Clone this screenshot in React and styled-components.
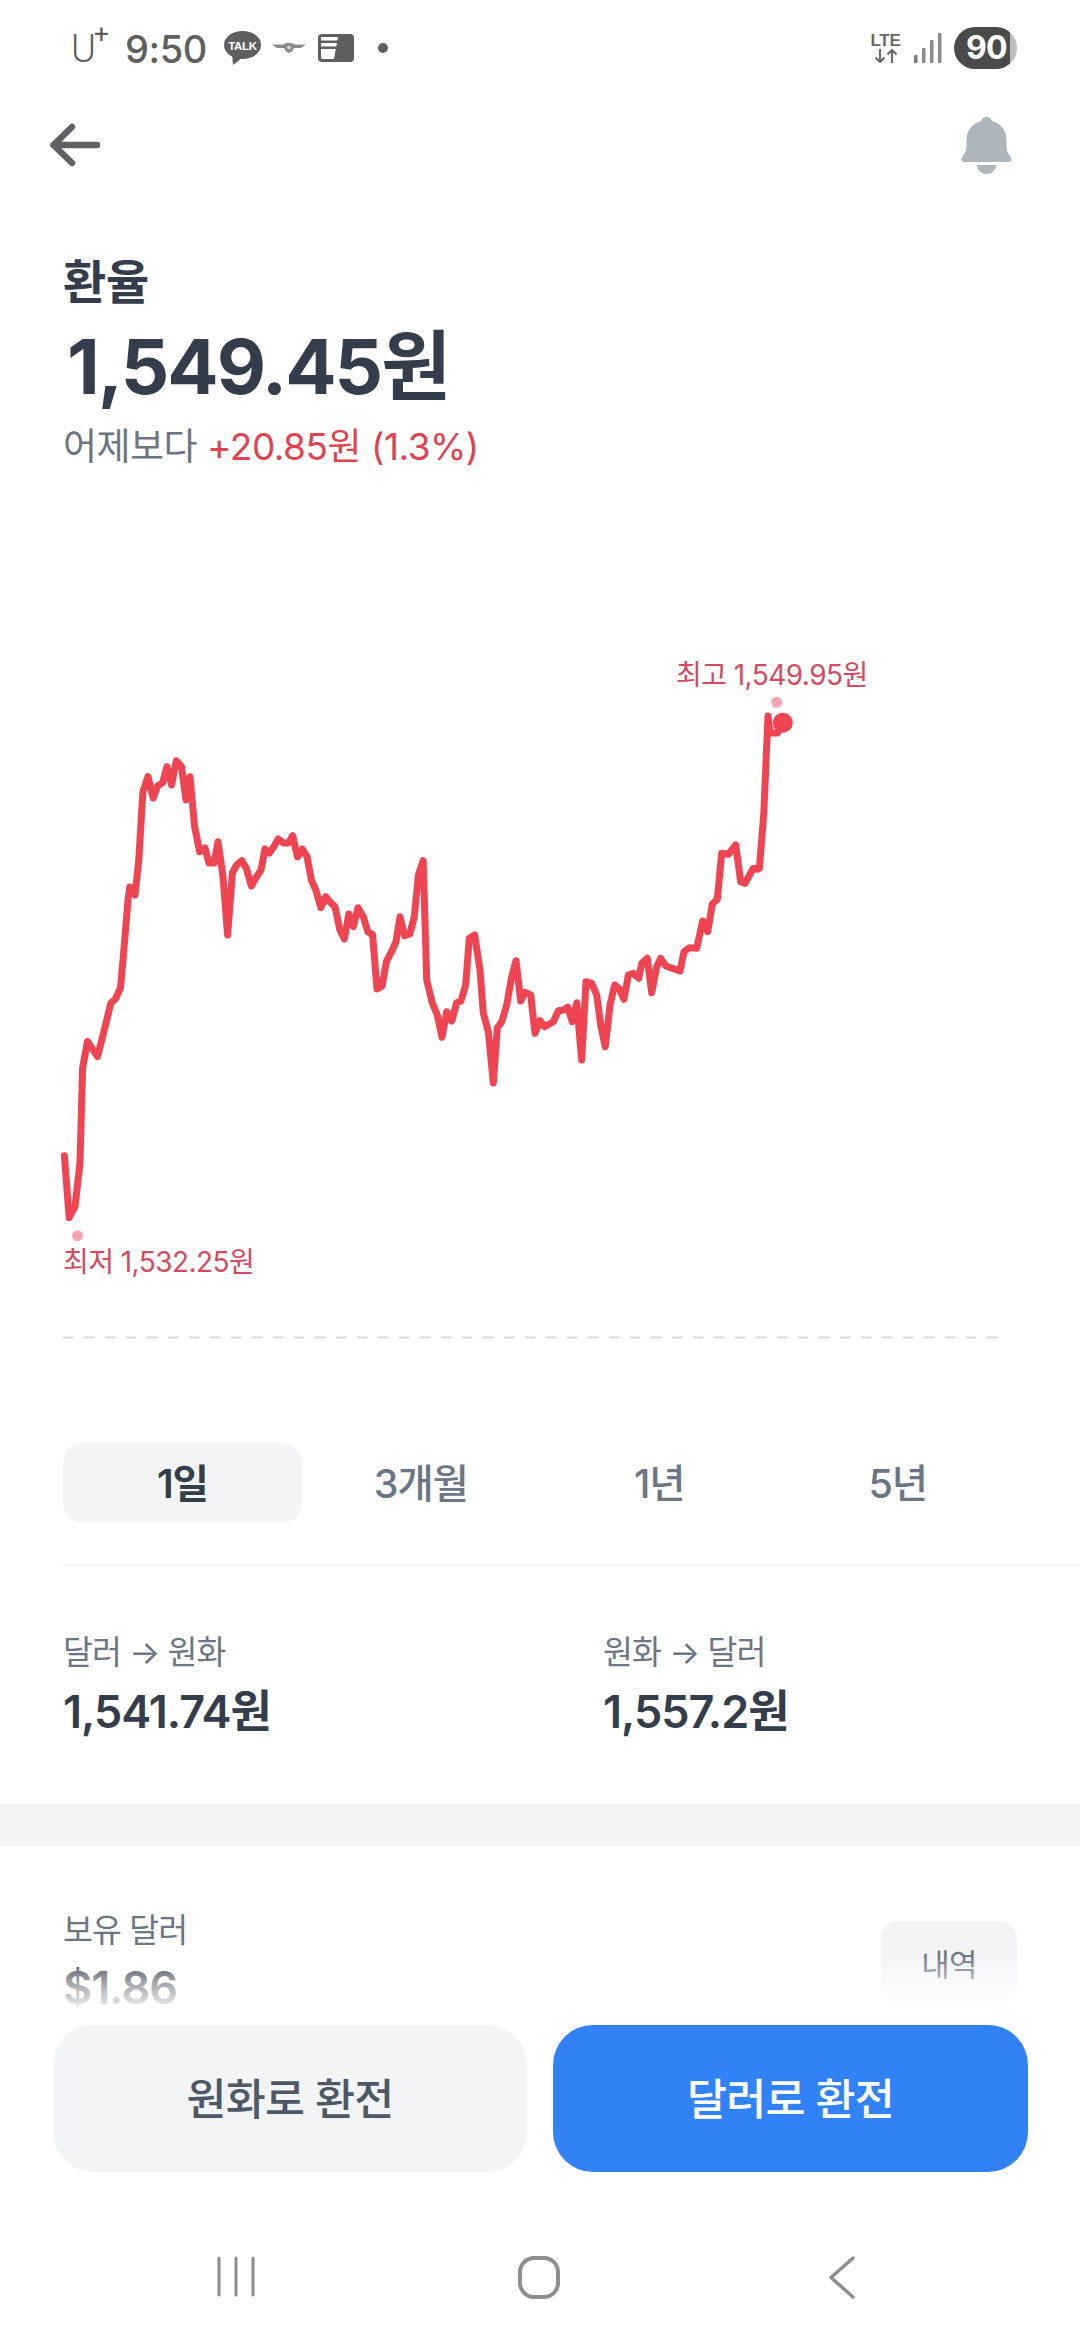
import React from "react";
import styled, { createGlobalStyle } from "styled-components";

const Global = createGlobalStyle`
  html, body { margin: 0; padding: 0; background: #fff; }
  body { font-family: Inter, "Noto Sans CJK KR", sans-serif; }
  * { box-sizing: border-box; }
`;

const Screen = styled.div`
  width: 1080px; height: 2340px; background: #fff; overflow: hidden;
  display: flex; flex-direction: column;
`;
const StatusBar = styled.div`
  height: 96px; flex: none; display: flex; align-items: center; justify-content: space-between;
  padding: 0 63px 0 71px; color: #5f5f5f;
`;
const StatusGroup = styled.div`display: flex; align-items: center; margin-top: -1px;`;
const Carrier = styled.span`
  font: 300 38px/40px Roboto, sans-serif; width: 54px; position: relative; margin-top: 3px;
`;
const CarrierPlus = styled.span`
  position: absolute; left: 23px; top: -10px; font: 400 26px/30px Roboto, sans-serif;
`;
const Clock = styled.span`
  font: 500 38px/40px Inter, sans-serif; width: 99px; letter-spacing: -0.4px; margin-top: 3px;
`;
const NotifyIcon = styled.svg`display: block; flex: none; margin-left: ${p => p.$gap || 0}px;`;
const LteBox = styled.div`
  display: flex; flex-direction: column; align-items: center; width: 31px; margin-right: 13px;
`;
const LteText = styled.span`font: 700 17px/17px "Liberation Sans", sans-serif; letter-spacing: -0.3px; color: #6a6a6a;`;
const Battery = styled.div`
  width: 63px; height: 42px; margin-left: 12px; border-radius: 21px; overflow: hidden;
  background: linear-gradient(90deg, #4a4a4a 0, #4a4a4a 56px, #bdbdbd 56px);
  color: #fff; font: 700 32px/42px Inter, sans-serif; padding-left: 12px; letter-spacing: -0.8px;
`;
const TopNav = styled.div`
  height: 98px; flex: none; display: flex; align-items: center; justify-content: space-between;
  padding: 0 68px 0 47px;
`;
const Scroll = styled.div`flex: 1; min-height: 0; overflow: hidden;`;
const Heading = styled.div`padding: 58px 0 0 63px;`;
const Title = styled.h1`
  margin: 0; font-size: 47px; line-height: 60px; font-weight: 700; color: #333d4b; letter-spacing: -0.2px;
`;
const Price = styled.div`
  margin: 9px 0 0 4px; font-size: 76px; line-height: 90px; font-weight: 700; color: #333d4b; letter-spacing: -2px;
`;
const Delta = styled.div`
  margin-top: 11px; font-size: 37px; line-height: 50px; font-weight: 400; color: #6b7684; letter-spacing: -0.5px;
`;
const DeltaUp = styled.span`color: #e0434f;`;
const Chart = styled.div`position: relative; height: 720px; margin-top: 168px;`;
const ChartSvg = styled.svg`display: block;`;
const ChartLabel = styled.span`
  position: absolute; left: ${p => p.$x}px; top: ${p => p.$y}px;
  font-size: 28px; line-height: 34px; color: #d34a61; letter-spacing: -0.55px; white-space: nowrap;
`;
const Tabs = styled.div`
  margin: 83px 63px 0; display: grid; grid-template-columns: repeat(4, 1fr); height: 80px;
`;
const Tab = styled.div`
  display: flex; align-items: center; justify-content: center; border-radius: 20px;
  padding-bottom: 5px; font-size: 39.500px; letter-spacing: -1.2px;
  font-weight: ${p => (p.$on ? 600 : 500)};
  color: ${p => (p.$on ? "#333d4b" : "#6b7684")};
  background: ${p => (p.$on ? "#f2f4f6" : "transparent")};
`;
const Divider = styled.div`height: 2px; margin: 41px 0 0 63px; background: #f2f4f6;`;
const Rates = styled.div`display: grid; grid-template-columns: 540px 1fr; padding: 65px 0 64px 63px;`;
const SmallLabel = styled.div`font-size: 32.500px; line-height: 44px; color: #6b7684; letter-spacing: -0.9px;`;
const RateValue = styled.div`
  margin-top: 9px; font-size: 45px; line-height: 56px; font-weight: 600; color: #333d4b; letter-spacing: -1px;
`;
const Band = styled.div`height: 42px; background: #f2f4f6;`;
const Holdings = styled.div`
  display: flex; align-items: center; justify-content: space-between; padding: 63px 63px 0;
`;
const Balance = styled.div`
  margin-top: 7px; font-size: 45px; line-height: 56px; font-weight: 600; color: #333d4b; letter-spacing: -1px;
`;
const HistoryButton = styled.div`
  width: 136px; height: 83px; border-radius: 18px; background: #f2f4f6;
  display: flex; align-items: center; justify-content: center;
  font-size: 31px; color: #6b7684; letter-spacing: -0.8px;
`;
const Footer = styled.div`
  flex: none; height: 147px; position: relative; display: grid; grid-template-columns: 474px 475px;
  gap: 26px; padding: 0 52px 0 53px; background: #fff;
  &::before {
    content: ""; position: absolute; left: 0; right: 0; bottom: 100%; height: 70px;
    background: linear-gradient(rgba(255,255,255,0), rgba(255,255,255,0.55) 40%, rgba(255,255,255,0.95) 80%, #fff);
  }
`;
const ActionButton = styled.div`
  border-radius: 40px; display: flex; align-items: center; justify-content: center;
  padding-bottom: 5px; font-size: 43.500px; font-weight: 500; letter-spacing: -0.8px;
  background: ${p => (p.$primary ? "#3182f6" : "#f2f4f6")};
  color: ${p => (p.$primary ? "#fff" : "#4e5968")};
`;
const NavBar = styled.div`
  flex: none; height: 168px; display: grid; grid-template-columns: repeat(3, 303px); justify-content: center;
  padding: 84px 2px 0 0; justify-items: center; align-items: start;
`;

const points = [
  [64.4,1155.7],[69.2,1217.7],[75,1206.7],[80,1163],[82.6,1068],[87.5,1041.5],[97.5,1056.7],[102.3,1038],[110.9,1003],[115.4,999],[120.5,988],[123.3,956.7],[128,900],[129.8,887],[135,895],[138.8,860],[142.9,791.7],[148,776.7],[153.2,798],[157.7,785.7],[162.5,783],[167,766.7],[171.5,785],[176.3,760.7],[181.5,766.7],[186,800],[190,776.7],[194.6,826.7],[199.7,851.7],[204.9,848],[209,863],[214.2,863],[218,841.7],[223,876.7],[227.6,935],[232.4,873],[236.6,865],[241.7,860.7],[246.2,868],[251.4,886],[256.5,876.7],[261,870],[265,849],[269.3,853],[273.8,846.7],[278.2,839],[283.4,843],[288.6,843],[292.7,835.7],[297.5,857],[302.3,849],[307,856.7],[311.6,880.7],[315.8,890],[320.9,907.7],[325.8,896.7],[330.6,902.7],[335,906.7],[339.9,930],[344.4,939],[348.8,914],[353.3,926.7],[358,907.7],[363.3,916.7],[367.8,931.7],[372.6,935],[377,989],[382.2,985.7],[386.4,961.7],[391.5,951.7],[396,941.7],[400,916.7],[404.6,935.7],[409.8,934],[414.3,916.7],[418.4,875],[423.2,860.7],[426.7,980],[432.3,1003],[437.3,1015],[442,1037.3],[446.7,1011.7],[451.7,1021],[456.7,1002.7],[461,1001],[465.7,985],[469.3,938.3],[474.7,935],[480,970],[483.3,1013],[488.3,1031.7],[493.3,1083],[497.3,1028],[501.7,1021.7],[506.7,1005],[511.7,976.7],[516,960.7],[520.7,1001],[525,992.3],[530.7,995],[535,1033.3],[540,1020.7],[544.7,1026.7],[553.3,1021.7],[558.3,1010.7],[563.3,1010],[567.7,1007.3],[572.3,1021.7],[576.7,1002.7],[581.7,1060],[586,981.7],[591.7,983.3],[596.7,995],[600.7,1025],[605.3,1046.7],[610,1005],[614.7,985],[619.3,989],[624,999.3],[628.3,975],[633.3,973.3],[638.7,978.3],[641.7,963.3],[647.3,958.3],[651.7,992.7],[656.7,966.7],[660.7,958.3],[665.7,966],[680,971],[684,951.7],[689.3,947.7],[696.7,948.3],[702.7,921],[707.7,931.7],[712.3,904],[717.3,899.3],[721.7,853.3],[728.3,854.3],[735.7,845],[740.7,881.7],[745,883.3],[753.3,868.3],[757.3,869.3],[759.4,868.3],[763.8,813],[768,716],[770,733],[777.6,733],[782.8,722.7]
].map(p => p.join(",")).join(" ");

const BackArrow = () => (
  <svg width="60" height="50" viewBox="0 0 60 50" fill="none" stroke="#5f6166" strokeWidth="6.5" strokeLinecap="round" strokeLinejoin="round">
    <path d="M6.500 25H50M25 7L6.500 25L25 43" />
  </svg>
);
const Bell = () => (
  <svg width="51" height="57" viewBox="0 0 51 57" fill="#adb5bd">
    <path d="M25.5 0c3 0 5 1.8 5.4 4C41 7 45.5 14 45.5 24v6c0 4 2 7 4.300 10.200 1.900 2.800.6 4.800-2.800 4.800H4c-3.400 0-4.700-2-2.800-4.800C3.500 37 5.500 34 5.500 30v-6C5.500 14 10 7 20.100 4c.4-2.200 2.400-4 5.400-4z" />
    <path d="M16 48h19c0 5-4.200 9-9.500 9S16 53 16 48z" />
  </svg>
);

export default function App() {
  return (
    <Screen>
      <Global />
      <StatusBar>
        <StatusGroup>
          <Carrier>U<CarrierPlus>+</CarrierPlus></Carrier>
          <Clock>9:50</Clock>
          <NotifyIcon width="37" height="34" viewBox="0 0 37 34">
            <ellipse cx="18.500" cy="14" rx="18.500" ry="14" fill="#5f5f5f" />
            <path d="M8 23l1 11 9-7z" fill="#5f5f5f" />
            <text x="18.500" y="18.500" textAnchor="middle" fill="#fff" fontFamily="Liberation Sans" fontWeight="700" fontSize="11.500" letterSpacing="-0.3">TALK</text>
          </NotifyIcon>
          <NotifyIcon $gap="11" width="34" height="10" viewBox="0 0 34 10">
            <path d="M0 1.500h11l3-1.500h6l3 1.500h11l-5 3.500h-7l-2 3.500-3 1.500-3-1.500-2-3.500H5z" fill="#8c8c8c" />
            <ellipse cx="17" cy="4.500" rx="2" ry="1.500" fill="#dcdcdc" />
          </NotifyIcon>
          <NotifyIcon $gap="12" width="36" height="28" viewBox="0 0 36 28">
            <rect width="36" height="28" rx="4" fill="#5f5f5f" />
            <path d="M3 3h17l-4 22H5a2 2 0 0 1-2-2z" fill="#fff" />
            <path d="M3 6.500h17v2.500H3zM3 12.500h15.500v2.500H3z" fill="#5f5f5f" />
          </NotifyIcon>
          <NotifyIcon $gap="24" width="10" height="10" viewBox="0 0 10 10">
            <circle cx="5" cy="5" r="5" fill="#5f5f5f" />
          </NotifyIcon>
        </StatusGroup>
        <StatusGroup>
          <LteBox>
            <LteText>LTE</LteText>
            <svg width="24" height="14" viewBox="0 0 24 14" fill="none" stroke="#6a6a6a" strokeWidth="2.200">
              <path d="M6 0v13M1.500 8.500L6 13l4.500-4.500M18 14V1M13.500 5.500L18 1l4.500 4.500" />
            </svg>
          </LteBox>
          <svg width="28" height="30" viewBox="0 0 28 30" fill="#7a7a7a">
            <rect x="0" y="22" width="3.500" height="8" rx="1" />
            <rect x="8" y="15" width="3.500" height="15" rx="1" fill="#8a8a8a" />
            <rect x="16" y="7" width="3.500" height="23" rx="1" fill="#8a8a8a" />
            <rect x="24" y="0" width="3.500" height="30" rx="1" fill="#8a8a8a" />
          </svg>
          <Battery>90</Battery>
        </StatusGroup>
      </StatusBar>
      <TopNav>
        <BackArrow />
        <Bell />
      </TopNav>
      <Scroll>
        <Heading>
          <Title>환율</Title>
          <Price>1,549.45원</Price>
          <Delta>어제보다 <DeltaUp>+20.85원 (1.3%)</DeltaUp></Delta>
        </Heading>
        <Chart>
          <ChartSvg width="1080" height="720" viewBox="0 640 1080 720">
            <polyline points={points} fill="none" stroke="#ef4452" strokeWidth="7" strokeLinecap="round" strokeLinejoin="round" />
            <circle cx="782.800" cy="722.700" r="10" fill="#ef4452" />
            <circle cx="776.600" cy="702.300" r="5.500" fill="#f5a6b0" />
            <circle cx="77.500" cy="1235.700" r="5.500" fill="#f5a6b0" />
            <line x1="63" y1="1337.500" x2="998" y2="1337.500" stroke="#d8dadd" strokeWidth="2" strokeDasharray="10.500 10.500" />
          </ChartSvg>
          <ChartLabel $x={676} $y={18}>최고 1,549.95원</ChartLabel>
          <ChartLabel $x={63} $y={605}>최저 1,532.25원</ChartLabel>
        </Chart>
        <Tabs>
          <Tab $on>1일</Tab>
          <Tab>3개월</Tab>
          <Tab>1년</Tab>
          <Tab>5년</Tab>
        </Tabs>
        <Divider />
        <Rates>
          <div>
            <SmallLabel>달러 → 원화</SmallLabel>
            <RateValue>1,541.74원</RateValue>
          </div>
          <div>
            <SmallLabel>원화 → 달러</SmallLabel>
            <RateValue>1,557.2원</RateValue>
          </div>
        </Rates>
        <Band />
        <Holdings>
          <div>
            <SmallLabel>보유 달러</SmallLabel>
            <Balance>$1.86</Balance>
          </div>
          <HistoryButton>내역</HistoryButton>
        </Holdings>
      </Scroll>
      <Footer>
        <ActionButton>원화로 환전</ActionButton>
        <ActionButton $primary>달러로 환전</ActionButton>
      </Footer>
      <NavBar>
        <svg width="38" height="41" viewBox="0 0 38 41" stroke="#8e8e8e" strokeWidth="3" strokeLinecap="round">
          <path d="M2 2v37M19 2v37M36 2v37" />
        </svg>
        <svg width="42" height="43" viewBox="0 0 42 43" fill="none" stroke="#8e8e8e" strokeWidth="4">
          <rect x="2" y="2" width="38" height="39" rx="14" />
        </svg>
        <svg width="28" height="43" viewBox="0 0 28 43" fill="none" stroke="#8e8e8e" strokeWidth="3.500" strokeLinecap="round" strokeLinejoin="round">
          <path d="M25 2L3 21.500L25 41" />
        </svg>
      </NavBar>
    </Screen>
  );
}
